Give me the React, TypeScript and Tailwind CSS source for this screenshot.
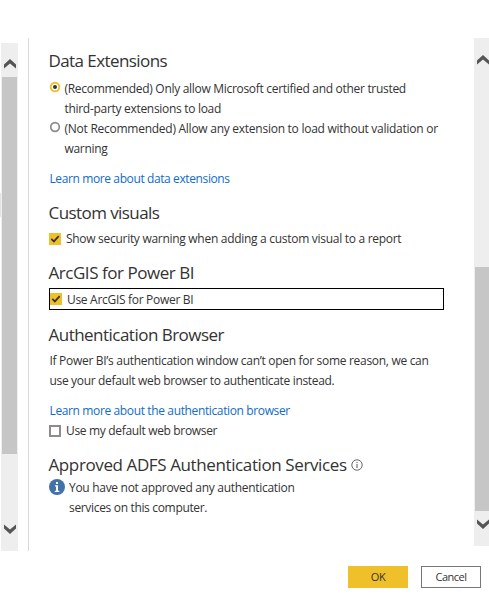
import type { ReactNode } from "react";

const Chevron = ({ down = false }) => (
  <svg
    viewBox="0 0 12 10"
    className={down ? "h-2.5 w-3 shrink-0 rotate-180" : "h-2.5 w-3 shrink-0"}
  >
    <path d="M0 9.6V5.6L6 0l6 5.6v4L6 4.4z" fill="#555" />
  </svg>
);

const Heading = ({ children }: { children: ReactNode }) => (
  <h2 className="-ml-[0.5px] flex h-[30px] items-center text-[17px] leading-[30px] whitespace-nowrap text-[#333]">
    {children}
  </h2>
);

const Radio = ({ checked = false }) => (
  <svg viewBox="0 0 12 12" className="mt-0.5 mr-[3.5px] size-3 shrink-0">
    <circle
      cx="6"
      cy="6"
      r="4.3"
      fill="#fff"
      stroke={checked ? "#efc02a" : "#8a8a8a"}
      strokeWidth={checked ? 1.9 : 1.7}
    />
    {checked && <circle cx="6" cy="6" r="2" fill="#333" />}
  </svg>
);

const Checkbox = ({ checked = false }) =>
  checked ? (
    <svg viewBox="0 0 12 12" className="size-3 shrink-0 bg-[#f0c02a]">
      <path d="M2.3 5.8l2.6 2.6 4.8-5.3" fill="none" stroke="#333" strokeWidth="1.7" />
    </svg>
  ) : (
    <span className="size-3 shrink-0 border-2 border-[#8c8c8c] bg-white" />
  );

const App = () => {
  return (
    <div className="flex h-[597px] w-[489px] flex-col overflow-hidden bg-white font-['Open_Sans','Noto_Sans',sans-serif] text-[12px] leading-5 tracking-[-0.3px] whitespace-nowrap text-[#333]">
      <div className="mt-[38px] flex h-[513px]">
        <div className="mt-[155px] h-6 w-px bg-[#e4e4e4]" />
        <div className="mt-[5px] flex h-[508px] w-[17px] flex-col items-center bg-[#eee]">
          <div className="flex h-[34px] shrink-0 items-center pt-2">
            <Chevron />
          </div>
          <div className="h-[377px] w-[15px] bg-[#c6c6c6]" />
          <div className="mt-[70px]">
            <Chevron down />
          </div>
        </div>
        <div className="ml-[10px] w-px bg-[#d9d9d9]" />

        <main className="w-[445px] pt-2 pl-5">
          <Heading>
            <span className="tracking-[-0.58px]">Data Extensions</span>
          </Heading>
          <div className="mt-[3px] flex">
            <Radio checked />
            <div>
              <p>(Recommended) Only allow Microsoft certified and other trusted</p>
              <p>third-party extensions to load</p>
            </div>
          </div>
          <div className="flex">
            <Radio />
            <div>
              <p className="tracking-[-0.26px]">
                (Not Recommended) Allow any extension to load without validation or
              </p>
              <p>warning</p>
            </div>
          </div>
          <p className="mt-2.5 pl-[0.5px] tracking-[-0.39px] text-[#0f6cc9]">
            Learn more about data extensions
          </p>

          <div className="mt-[9px]">
            <Heading>
              <span className="tracking-[-0.57px]">Custom visuals</span>
            </Heading>
          </div>
          <label className="mt-px flex items-center gap-[5px]">
            <Checkbox checked />
            <span className="tracking-[-0.29px]">
              Show security warning when adding a custom visual to a report
            </span>
          </label>

          <div className="mt-[9px]">
            <Heading>
              <span className="tracking-[-0.46px]">ArcGIS for Power BI</span>
            </Heading>
          </div>
          <label className="flex h-[22px] w-[395px] items-center gap-[5px] border border-black">
            <Checkbox checked />
            <span className="pt-px">Use ArcGIS for Power BI</span>
          </label>

          <div className="mt-2.5">
            <Heading>
              <span className="tracking-[-0.52px]">Authentication Browser</span>
            </Heading>
          </div>
          <div className="mt-px pl-[0.5px]">
            <p>If Power BI’s authentication window can’t open for some reason, we can</p>
            <p className="tracking-[-0.33px]">
              use your default web browser to authenticate instead.
            </p>
            <p className="mt-2.5 tracking-[-0.37px] text-[#0f6cc9]">
              Learn more about the authentication browser
            </p>
          </div>
          <label className="flex items-center gap-[5px]">
            <Checkbox />
            <span className="tracking-[-0.33px]">Use my default web browser</span>
          </label>

          <div className="mt-[9px]">
            <Heading>
              <span className="tracking-[-0.39px]">Approved ADFS Authentication Services</span>
              <svg viewBox="0 0 12 12" className="ml-1 size-3 shrink-0">
                <circle cx="6" cy="6" r="5.2" fill="none" stroke="#555" strokeWidth="0.9" />
                <path d="M6 5v4M6 3v1.1" stroke="#555" />
              </svg>
            </Heading>
          </div>
          <div className="-mt-0.5 flex gap-1">
            <svg viewBox="0 0 16 16" className="mt-px size-4 shrink-0">
              <circle cx="8" cy="8" r="8" fill="#4273a8" />
              <path d="M6 6.2h3v5.6h1.3V13H5.8v-1.2h1.3V7.4H6zM7 3h2v2H7z" fill="#fff" />
            </svg>
            <div>
              <p>You have not approved any authentication</p>
              <p className="tracking-[-0.33px]">services on this computer.</p>
            </div>
          </div>
        </main>

        <div className="flex h-[508px] w-[15px] flex-col bg-[#eee] pl-px">
          <div className="ml-0.5 flex h-[229px] shrink-0 pt-[17px]">
            <Chevron />
          </div>
          <div className="h-[244px] bg-[#c6c6c6]" />
          <div className="ml-0.5 pt-2">
            <Chevron down />
          </div>
        </div>
      </div>

      <div className="mt-[15px] ml-[348px] flex gap-[13px] text-[11px] tracking-[-0.5px]">
        <button className="h-[22px] w-[60px] bg-[#f0c02a]">OK</button>
        <button className="h-[22px] w-[60px] border border-[#777] bg-white">Cancel</button>
      </div>
    </div>
  );
};

export default App;
